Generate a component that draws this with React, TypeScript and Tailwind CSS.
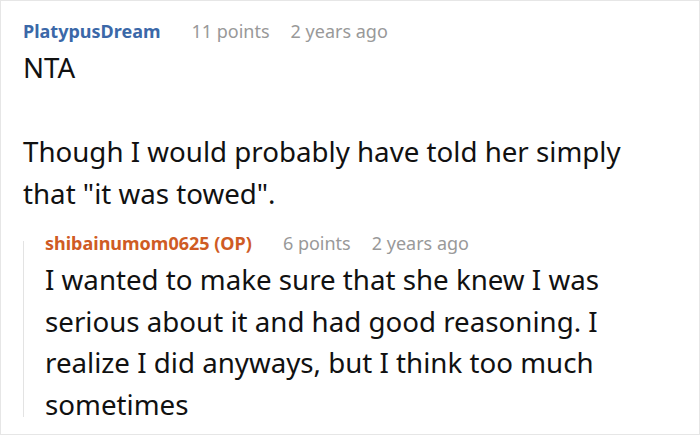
import React from "react";

export default function App() {
  return (
    <div
      className="w-[700px] h-[436px] bg-white overflow-hidden"
      style={{ fontFamily: '"Noto Sans", "Open Sans", sans-serif' }}
    >
      <div className="w-[700px] h-[435px] border border-[#e6e6e6] pl-[22px] pr-[20px] pt-[16px]">
        <div className="flex items-baseline text-[18px] leading-[29px]">
          <span className="font-bold text-[#3b68a8]">PlatypusDream</span>
          <span className="ml-[31px] text-[#999999]">11 points</span>
          <span className="ml-[21px] text-[#999999]">2 years ago</span>
        </div>
        <div className="text-[27.7px] leading-[42px] text-[#111111]">
          <p>NTA</p>
          <p>&nbsp;</p>
          <p>Though I would probably have told her simply that "it was towed".</p>
        </div>
        <div className="mt-[17px] flex">
          <div className="w-px bg-[#e3e3e3] mt-[10px] mb-[8px] shrink-0" />
          <div className="pl-[21px] flex-1">
            <div className="flex items-baseline text-[18px] leading-[24px]">
              <span className="font-bold text-[#cf5b24]">shibainumom0625 (OP)</span>
              <span className="ml-[31px] text-[#999999]">6 points</span>
              <span className="ml-[21px] text-[#999999]">2 years ago</span>
            </div>
            <p className="mt-[4px] text-[27.7px] leading-[41.6px] text-[#111111]">
              I wanted to make sure that she knew I was serious about it and had good reasoning. I realize I did anyways, but I think too much sometimes
            </p>
          </div>
        </div>
      </div>
    </div>
  );
}
